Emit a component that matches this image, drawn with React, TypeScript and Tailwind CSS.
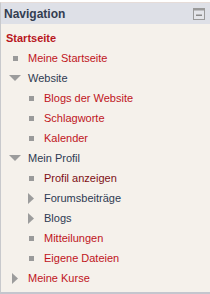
import React from "react";

type Kind = "bullet" | "down" | "right";
type Item = { label: string; level: 1 | 2; kind: Kind; color: string };

const RED = "text-[#c0141c]";
const DARK = "text-[#2e3a52]";
const VISITED = "text-[#7e0f14]";

const items: Item[] = [
  { label: "Meine Startseite", level: 1, kind: "bullet", color: RED },
  { label: "Website", level: 1, kind: "down", color: DARK },
  { label: "Blogs der Website", level: 2, kind: "bullet", color: RED },
  { label: "Schlagworte", level: 2, kind: "bullet", color: RED },
  { label: "Kalender", level: 2, kind: "bullet", color: RED },
  { label: "Mein Profil", level: 1, kind: "down", color: DARK },
  { label: "Profil anzeigen", level: 2, kind: "bullet", color: VISITED },
  { label: "Forumsbeiträge", level: 2, kind: "right", color: DARK },
  { label: "Blogs", level: 2, kind: "right", color: DARK },
  { label: "Mitteilungen", level: 2, kind: "bullet", color: RED },
  { label: "Eigene Dateien", level: 2, kind: "bullet", color: RED },
  { label: "Meine Kurse", level: 1, kind: "right", color: RED },
];

function Icon({ kind }: { kind: Kind }) {
  if (kind === "bullet") {
    return (
      <span className="flex w-3 h-5 items-center justify-center">
        <span className="block w-[5px] h-[5px] bg-[#9a9a9a]" />
      </span>
    );
  }
  if (kind === "down") {
    return (
      <span className="flex w-3 h-5 items-center justify-center">
        <svg width="12" height="6" viewBox="0 0 12 6">
          <polygon points="0,0 12,0 6,6" fill="#9c9c9c" />
        </svg>
      </span>
    );
  }
  return (
    <span className="flex w-3 h-5 items-center justify-center">
      <svg width="6" height="11" viewBox="0 0 6 11">
        <polygon points="0,0 6,5.5 0,11" fill="#9c9c9c" />
      </svg>
    </span>
  );
}

export default function App() {
  return (
    <div
      className="w-[210px] h-[294px] bg-white pt-[2px]"
      style={{ fontFamily: '"Liberation Sans", Arial, sans-serif' }}
    >
      <div className="h-[292px] flex flex-col border-l border-l-[#c8c9cc] border-t border-t-[#e6dcd8] border-b-2 border-b-[#c4c6ce] bg-[#f5f1eb]">
        <div className="h-[21px] bg-[#dee0e7] flex items-center justify-between pl-[3px] pr-[5px]">
          <span className="text-[12px] font-bold text-[#333d50] leading-none">Navigation</span>
          <svg width="12" height="12" viewBox="0 0 12 12">
            <rect x="0.5" y="0.5" width="11" height="11" fill="#e4e5ea" stroke="#9a9a9a" />
            <rect x="1" y="1" width="10" height="1.5" fill="#9a9a9a" />
            <rect x="3" y="6.5" width="6" height="1.5" fill="#8a8a8a" />
          </svg>
        </div>
        <div className="flex flex-col pt-1 pl-[5px]">
          <div className="h-5 flex items-center text-[11px] font-bold text-[#b8161e]">Startseite</div>
          {items.map((it) => (
            <div
              key={it.label}
              className={`h-5 flex items-center gap-[7px] text-[11px] ${it.color} ${it.level === 1 ? "pl-[3px]" : "pl-[19px]"}`}
            >
              <Icon kind={it.kind} />
              <span className="leading-5">{it.label}</span>
            </div>
          ))}
        </div>
      </div>
    </div>
  );
}
